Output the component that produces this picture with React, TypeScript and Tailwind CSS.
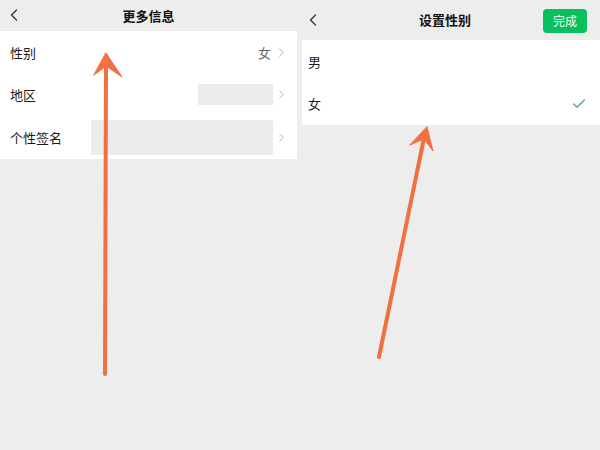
import { ChevronLeft, ChevronRight, Check } from 'lucide-react'

const font = { fontFamily: '"Noto Sans CJK SC", "Noto Sans", sans-serif' }

function Row({ label, children }: { label: string; children?: React.ReactNode }) {
  return (
    <div className="flex h-[42.5px] items-center bg-white pl-[10px] pr-[8px]">
      <span className="shrink-0 text-[13px] text-[#1a1a1a]">{label}</span>
      {children}
    </div>
  )
}

export default function App() {
  return (
    <div className="relative flex h-[450px] w-[600px] overflow-hidden bg-[#ededed]" style={font}>
      {/* more info */}
      <div className="w-[297px]">
        <div className="relative flex h-[31px] items-center justify-center">
          <ChevronLeft className="absolute left-[4px] top-[5px] text-[#333]" size={20} strokeWidth={1.6} />
          <span className="text-[13px] font-bold text-[#111]">更多信息</span>
        </div>
        <Row label="性别">
          <span className="ml-auto text-[13px] text-[#666]">女</span>
          <ChevronRight className="ml-[3px] text-[#b2b2b2]" size={15} strokeWidth={1.5} />
        </Row>
        <Row label="地区">
          <div className="ml-auto h-[21px] w-[75px] bg-[#ececec]" />
          <ChevronRight className="ml-[1px] text-[#b2b2b2]" size={15} strokeWidth={1.5} />
        </Row>
        <Row label="个性签名">
          <div className="ml-auto h-[35px] w-[182px] bg-[#ececec]" />
          <ChevronRight className="ml-[1px] text-[#b2b2b2]" size={15} strokeWidth={1.5} />
        </Row>
      </div>

      {/* set gender */}
      <div className="ml-[5px] flex-1">
        <div className="relative flex h-[40px] items-center justify-center pr-[12px]">
          <ChevronLeft className="absolute left-[1px] top-[10px] text-[#333]" size={20} strokeWidth={1.6} />
          <span className="text-[13px] font-bold text-[#111]">设置性别</span>
          <button className="absolute right-[13px] top-[9px] h-[24px] w-[44px] rounded-[4px] bg-[#07c160] text-[12px] text-white">
            完成
          </button>
        </div>
        <div className="bg-white">
          <div className="flex h-[42.5px] items-center pl-[6px]">
            <span className="text-[13px] text-[#1a1a1a]">男</span>
          </div>
          <div className="flex h-[42.5px] items-center pl-[6px] pr-[13px]">
            <span className="text-[13px] text-[#1a1a1a]">女</span>
            <Check className="ml-auto text-[#5e9e9a]" size={16} strokeWidth={2} />
          </div>
        </div>
      </div>

      {/* annotation arrows */}
      <svg className="pointer-events-none absolute inset-0" width={600} height={450} viewBox="0 0 600 450">
        <g stroke="#f07040" strokeWidth={4} strokeLinecap="round" fill="#f07040">
          <line x1={105} y1={374} x2={106} y2={64} />
          <polygon points="106,53 122,77 106,66 94,75" strokeWidth={1} strokeLinejoin="round" />
          <line x1={379} y1={357} x2={424} y2={138} />
          <polygon points="427,127 433,151 424,139 410,145" strokeWidth={1} strokeLinejoin="round" />
        </g>
      </svg>
    </div>
  )
}
